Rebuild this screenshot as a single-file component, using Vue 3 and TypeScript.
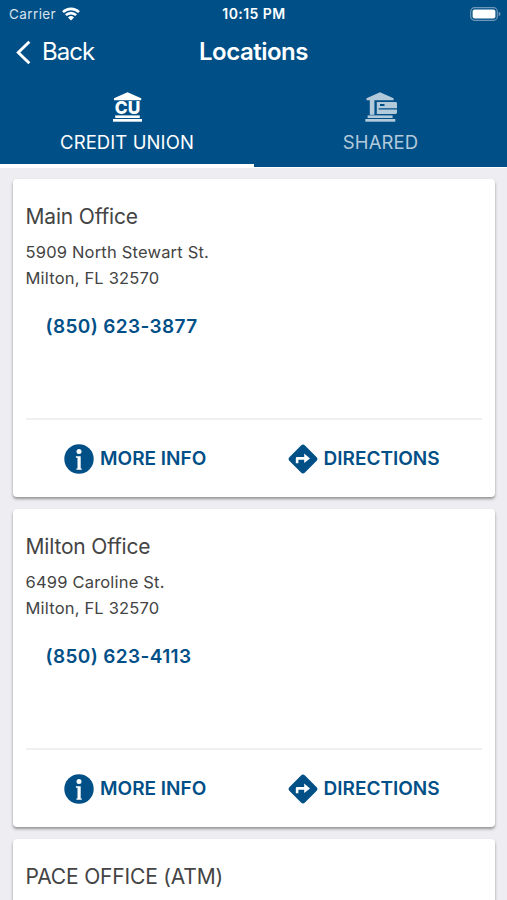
<script setup lang="ts">
import { ref } from 'vue'

interface Office {
  name: string
  street?: string
  city?: string
  phone?: string
}

const activeTab = ref<'cu' | 'shared'>('cu')

const offices: Office[] = [
  { name: 'Main Office', street: '5909 North Stewart St.', city: 'Milton, FL 32570', phone: '(850) 623-3877' },
  { name: 'Milton Office', street: '6499 Caroline St.', city: 'Milton, FL 32570', phone: '(850) 623-4113' },
  { name: 'PACE OFFICE (ATM)' },
]
</script>

<template>
  <div class="screen">
    <header class="header">
      <div class="status">
        <div class="carrier">
          <span>Carrier</span>
          <svg class="wifi" viewBox="0 0 18 14">
            <path d="M1 5.2 A11.3 11.3 0 0 1 17 5.2" />
            <path d="M3.9 8.2 A7.2 7.2 0 0 1 14.1 8.2" />
            <path class="solid" d="M9 13.6 L6 10.5 A4.3 4.3 0 0 1 12 10.5 Z" />
          </svg>
        </div>
        <span class="time">10:15 PM</span>
        <svg class="battery" viewBox="0 0 31 14">
          <rect x="0.7" y="0.7" width="26.6" height="12.6" rx="3.8" fill="none" stroke="#6f98b8" stroke-width="1.2" />
          <rect x="2.6" y="2.5" width="22.8" height="9" rx="2" fill="#fff" />
          <path d="M28.7 4.8 Q30.6 5.5 30.6 7 Q30.6 8.5 28.7 9.2 Z" fill="#6f98b8" />
        </svg>
      </div>
      <nav class="navbar">
        <button class="back">
          <svg viewBox="0 0 16 24"><path d="M13.6 1.6 L3 12 L13.6 22.4" /></svg>
          <span>Back</span>
        </button>
        <h1>Locations</h1>
        <span></span>
      </nav>
      <div class="tabs">
        <button class="tab" :class="{ active: activeTab === 'cu' }" @click="activeTab = 'cu'">
          <svg class="tab-icon" viewBox="0 0 32 32" fill="currentColor">
            <path d="M16.5 1.2 L30.2 7.2 V9.3 H3 V7.2 Z" />
            <rect x="4.2" y="24.4" width="24.6" height="2.6" />
            <rect x="2" y="28" width="29" height="2.7" />
            <text class="monogram" x="16.5" y="22.8" text-anchor="middle" textLength="25.5" lengthAdjust="spacingAndGlyphs">CU</text>
          </svg>
          <span class="tab-label">CREDIT UNION</span>
        </button>
        <button class="tab" :class="{ active: activeTab === 'shared' }" @click="activeTab = 'shared'">
          <svg class="tab-icon" viewBox="0 0 32 32" fill="currentColor">
            <path d="M15 1.2 L28.6 7.2 V9.3 H1.5 V7.2 Z" />
            <rect x="4.8" y="9" width="4.6" height="14.8" />
            <path
              fill-rule="evenodd"
              d="M11.8 10.9 H30.6 Q32 10.9 32 12.2 V17.2 H13.6 V18.6 H32 V21.6 Q32 22.9 30.6 22.9 H11.8 Z M15 13 V15 H19.5 V13 Z"
            />
            <rect x="2.6" y="24.4" width="25" height="2.6" />
            <rect x="0.3" y="28" width="30" height="2.7" />
          </svg>
          <span class="tab-label">SHARED</span>
        </button>
      </div>
    </header>

    <main class="list">
      <article v-for="office in offices" :key="office.name" class="card">
        <h2>{{ office.name }}</h2>
        <template v-if="office.phone">
          <p class="address">{{ office.street }}<br />{{ office.city }}</p>
          <a class="phone">{{ office.phone }}</a>
          <div class="actions">
            <button class="action info">
              <svg viewBox="0 0 30 30">
                <circle cx="15" cy="15" r="14.7" fill="#004f87" />
                <circle cx="15" cy="7.6" r="2.5" fill="#fff" />
                <path d="M11.9 12.2 H16.7 V24.6 H17.8 V25.8 H12.4 V24.6 H13.5 V13.8 H11.9 Z" fill="#fff" />
              </svg>
              <span>MORE INFO</span>
            </button>
            <button class="action directions">
              <svg viewBox="0 0 30 30">
                <rect x="4.1" y="4.1" width="21.8" height="21.8" rx="2.8" transform="rotate(45 15 15)" fill="#004f87" />
                <path d="M7.8 19.2 V14.4 Q7.8 13 9.2 13 H16.2 V9.6 L22 14.4 L16.2 19 V15.7 H10.4 V19.2 Z" fill="#fff" />
              </svg>
              <span>DIRECTIONS</span>
            </button>
          </div>
        </template>
      </article>
    </main>
  </div>
</template>

<style>
body {
  margin: 0;
  background: #eeeef2;
}
</style>

<style scoped>
.screen {
  width: 507px;
  height: 900px;
  overflow: hidden;
  background: #eeeef2;
  color: #444;
  font-family: Inter, "Liberation Sans", sans-serif;
}
button {
  padding: 0;
  border: 0;
  background: none;
  color: inherit;
  font: inherit;
}
svg {
  display: block;
  flex: none;
}
.header {
  box-sizing: border-box;
  height: 168px;
  background: #004f87;
  color: #fff;
  border-bottom: 1px solid #fff;
}
.status {
  display: grid;
  grid-template-columns: 1fr auto 1fr;
  align-items: center;
  height: 27px;
  padding: 0 6px 0 9px;
  font-size: 13.5px;
}
.carrier {
  display: flex;
  align-items: center;
  gap: 6px;
  color: #d5e3ee;
  letter-spacing: 0.4px;
}
.wifi {
  width: 18px;
  height: 14px;
  fill: none;
  stroke: #fff;
  stroke-width: 2.6;
}
.wifi .solid {
  fill: #fff;
  stroke: none;
}
.time {
  margin-left: -2px;
  font-size: 14px;
  font-weight: 600;
  letter-spacing: 0.45px;
}
.battery {
  width: 31px;
  height: 14px;
  justify-self: end;
}
.navbar {
  display: grid;
  grid-template-columns: 1fr auto 1fr;
  align-items: center;
  height: 50px;
}
.back {
  display: flex;
  align-items: center;
  gap: 10px;
  padding-left: 15px;
  font-size: 24px;
  letter-spacing: -1px;
}
.back svg {
  width: 17px;
  height: 25px;
  fill: none;
  stroke: #fff;
  stroke-width: 2.8;
}
.back span,
h1 {
  margin-top: -2px;
}
h1 {
  margin-bottom: 0;
  font-size: 24px;
  font-weight: 600;
  letter-spacing: -0.5px;
}
.tabs {
  display: grid;
  grid-template-columns: 254px 253px;
  height: 90px;
}
.tab {
  display: flex;
  flex-direction: column;
  align-items: center;
  padding-top: 14px;
  color: #b3cadb;
  border-bottom: 3px solid transparent;
}
.tab.active {
  color: #fff;
  border-bottom-color: #fff;
}
.tab-icon {
  width: 32px;
  height: 32px;
}
.monogram {
  font-size: 18px;
  font-weight: 800;
}
.tab-label {
  margin-top: 7px;
  font-size: 18.5px;
  line-height: 24px;
  letter-spacing: 0.1px;
}
.list {
  display: flex;
  flex-direction: column;
  gap: 12px;
  padding: 11px 12px 0 13px;
}
.card {
  display: flex;
  flex-direction: column;
  box-sizing: border-box;
  flex: none;
  height: 318px;
  padding: 24px 13px 0 12.5px;
  border-radius: 4px;
  background: #fff;
  box-shadow: 0 2px 3px rgba(0, 0, 0, 0.38);
}
h2 {
  margin: 0;
  font-size: 21px;
  font-weight: 400;
  line-height: 28px;
  letter-spacing: -0.17px;
}
.address {
  margin: 9px 0 0;
  height: 52px;
  font-size: 16.5px;
  line-height: 25.6px;
  letter-spacing: 0.19px;
}
.phone {
  margin: 23px 0 0 20px;
  height: 24px;
  font-size: 19px;
  font-weight: 600;
  line-height: 24px;
  letter-spacing: 0.37px;
  color: #004f87;
}
.actions {
  display: flex;
  box-sizing: border-box;
  height: 79px;
  margin-top: auto;
  border-top: 2px solid #f0f0f2;
  color: #004f87;
  font-size: 19px;
  font-weight: 600;
  letter-spacing: 0.15px;
}
.action {
  display: flex;
  align-items: center;
  gap: 6px;
}
.action svg {
  width: 30px;
  height: 30px;
}
.info {
  box-sizing: border-box;
  width: 262px;
  padding-left: 38.5px;
}
</style>
